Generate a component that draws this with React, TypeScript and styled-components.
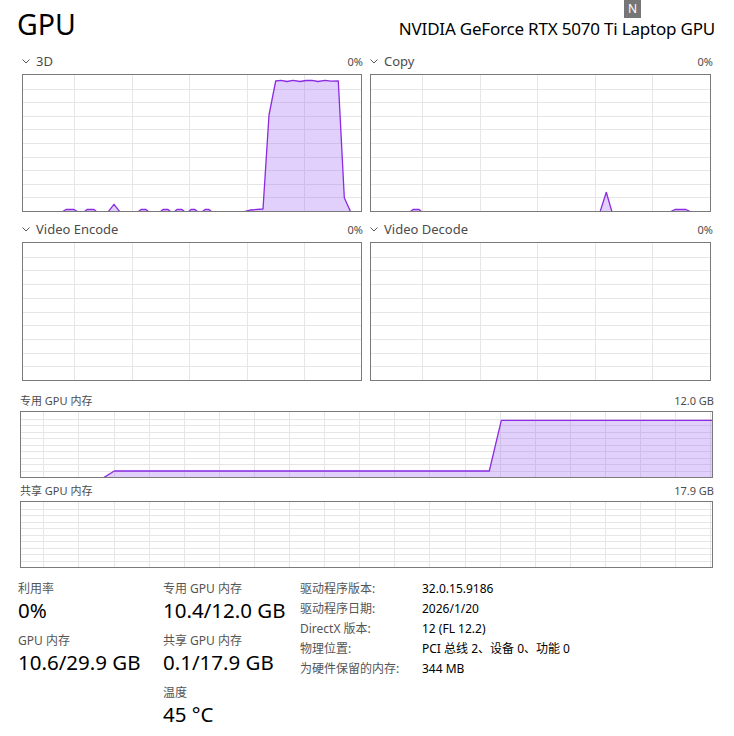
import React from "react";
import styled, { createGlobalStyle } from "styled-components";

type Pt = [number, number];

const LINE = "#8b2be2";
const FILL = "rgba(155, 95, 245, 0.3)";
const GRID = "#e6e6e6";

const GlobalStyle = createGlobalStyle`
  body {
    margin: 0;
    background: #fff;
    font-family: "Noto Sans", "Noto Sans CJK SC", sans-serif;
  }
`;

const Page = styled.div`
  position: relative;
  width: 734px;
  height: 736px;
  overflow: hidden;
  background: #fff;
  color: #000;
`;

const Badge = styled.div`
  position: absolute;
  left: 624px;
  top: 0;
  width: 17px;
  height: 18px;
  background: #767676;
  color: #fff;
  font-size: 12px;
  line-height: 18px;
  text-align: center;
`;

const Header = styled.div`
  display: flex;
  justify-content: space-between;
  align-items: baseline;
  height: 43px;
  padding: 0 19px 0 17px;
  box-sizing: border-box;
`;

const Title = styled.div`
  font-size: 28.5px;
  line-height: 48px;
`;

const Subtitle = styled.div`
  font-size: 17px;
  letter-spacing: -0.2px;
`;

const ChartGrid = styled.div`
  display: grid;
  grid-template-columns: 339px 341px;
  column-gap: 9px;
  padding: 0 23px 0 22px;
`;

const Head = styled.div<{ $h: number; $pad?: number }>`
  display: flex;
  justify-content: space-between;
  align-items: flex-end;
  height: ${(p) => p.$h}px;
  padding-bottom: ${(p) => p.$pad ?? 5}px;
  box-sizing: border-box;
  color: #4c4c4c;
`;

const HeadLabel = styled.div`
  display: flex;
  align-items: center;
  gap: 6px;
  font-size: 13px;
  line-height: 16px;
`;

const HeadValue = styled.div`
  font-size: 11px;
  line-height: 14px;
  margin-right: -2px;
`;

const SmallLabel = styled.div`
  font-size: 11px;
  line-height: 14px;
`;

const Box = styled.div<{ $w: number; $h: number }>`
  width: ${(p) => p.$w}px;
  height: ${(p) => p.$h}px;
  border: 1px solid #7a7a7a;
  box-sizing: border-box;
  overflow: hidden;

  svg {
    display: block;
  }
`;

const MemSection = styled.div`
  padding: 0 22px 0 20px;
`;

const Stats = styled.div`
  display: grid;
  grid-template-columns: 145px 137px 1fr;
  padding: 12px 0 0 18px;
`;

const StatColumn = styled.div`
  display: flex;
  flex-direction: column;
`;

const Stat = styled.div`
  height: 52px;
`;

const StatLabel = styled.div`
  font-size: 12px;
  line-height: 18px;
  color: #555;
`;

const StatValue = styled.div`
  font-size: 20.5px;
  line-height: 24px;
  color: #000;
`;

const InfoTable = styled.div`
  display: grid;
  grid-template-columns: 122px 1fr;
  grid-auto-rows: 20px;
  align-items: center;
  font-size: 12px;
  margin-top: -2px;
`;

const InfoKey = styled.div`
  color: #555;
`;

const InfoVal = styled.div`
  color: #000;
`;

const Chevron = () => (
  <svg width="8" height="5" viewBox="0 0 8 5">
    <path d="M0.5 0.5 L4 4 L7.5 0.5" fill="none" stroke="#555" strokeWidth="1" />
  </svg>
);

interface ChartProps {
  w: number;
  h: number;
  cell: number;
  offset: number;
  rows: number;
  origin?: Pt;
  data?: Pt[];
}

const Chart = ({ w, h, cell, offset, rows, origin = [0, 0], data }: ChartProps) => {
  const W = w - 2;
  const H = h - 2;
  const vLines: number[] = [];
  for (let x = offset; x < W; x += cell) vLines.push(Math.round(x) + 0.5);
  const hLines: number[] = [];
  for (let k = 1; k < rows; k++) hLines.push(Math.round((k * H) / rows) + 0.5);

  const pts = (data ?? []).map(([x, y]) => [x - origin[0], y - origin[1]] as Pt);
  const line = pts.map(([x, y]) => `${x},${y}`).join(" ");
  const area = pts.length
    ? `M${pts[0][0]},${H + 2} L${line.replace(/ /g, " L")} L${pts[pts.length - 1][0]},${H + 2} Z`
    : "";

  return (
    <Box $w={w} $h={h}>
      <svg width={W} height={H} viewBox={`0 0 ${W} ${H}`}>
        {vLines.map((x) => (
          <line key={`v${x}`} x1={x} x2={x} y1={0} y2={H} stroke={GRID} strokeWidth={1} />
        ))}
        {hLines.map((y) => (
          <line key={`h${y}`} x1={0} x2={W} y1={y} y2={y} stroke={GRID} strokeWidth={1} />
        ))}
        {pts.length > 0 && (
          <>
            <path d={area} fill={FILL} />
            <polyline points={line} fill="none" stroke={LINE} strokeWidth={1.3} strokeLinejoin="round" />
          </>
        )}
      </svg>
    </Box>
  );
};

const data3d: Pt[] = [
  [23, 212], [62, 212], [66, 209.5], [74, 209.5], [78, 212], [84, 212], [87, 209.5], [94, 209.5],
  [97, 212], [108, 212], [114, 204.3], [120, 212], [138, 212], [141, 209.5], [146, 209.5], [149, 212],
  [160, 212], [163, 209.5], [168, 209.5], [171, 212], [174, 212], [177, 209.5], [182, 209.5], [185, 212],
  [188, 212], [191, 209.5], [195, 209.5], [198, 212], [202, 212], [205, 209.5], [209, 209.5], [212, 212],
  [243, 212], [250, 210], [263, 209], [269, 115], [275.7, 81], [281, 80.3], [287, 81.5], [293, 80.3],
  [300, 81.5], [306, 80.5], [312, 80.3], [318, 81.5], [325, 80.3], [331, 81.2], [338.3, 81],
  [344.3, 197.7], [350.7, 212], [361, 212],
];

const dataCopy: Pt[] = [
  [371, 212], [410, 212], [413, 209.5], [419, 209.5], [422, 212], [600, 212], [606.3, 192.3],
  [612, 212], [670, 212], [675, 209.5], [686, 209.5], [691, 212], [711, 212],
];

const dataMem: Pt[] = [
  [21, 478], [103, 478], [114.3, 471], [489.3, 471], [501.3, 420.3], [713, 420.3],
];

const engines = [
  { name: "3D", data: data3d, origin: [23, 75] as Pt },
  { name: "Copy", data: dataCopy, origin: [371, 75] as Pt },
  { name: "Video Encode" },
  { name: "Video Decode" },
];

const stats = [
  [
    { label: "利用率", value: "0%" },
    { label: "GPU 内存", value: "10.6/29.9 GB" },
  ],
  [
    { label: "专用 GPU 内存", value: "10.4/12.0 GB" },
    { label: "共享 GPU 内存", value: "0.1/17.9 GB" },
    { label: "温度", value: "45 °C" },
  ],
];

const info = [
  ["驱动程序版本:", "32.0.15.9186"],
  ["驱动程序日期:", "2026/1/20"],
  ["DirectX 版本:", "12 (FL 12.2)"],
  ["物理位置:", "PCI 总线 2、设备 0、功能 0"],
  ["为硬件保留的内存:", "344 MB"],
];

const App = () => {
  return (
    <Page>
      <GlobalStyle />
      <Badge>N</Badge>
      <Header>
        <Title>GPU</Title>
        <Subtitle>NVIDIA GeForce RTX 5070 Ti Laptop GPU</Subtitle>
      </Header>

      <ChartGrid>
        {engines.map((e, i) => (
          <div key={e.name}>
            <Head $h={i < 2 ? 31 : 30}>
              <HeadLabel>
                <Chevron />
                {e.name}
              </HeadLabel>
              <HeadValue>0%</HeadValue>
            </Head>
            <Chart
              w={i % 2 === 0 ? 340 : 341}
              h={i < 2 ? 138 : 139}
              cell={57.5}
              offset={51}
              rows={10}
              origin={e.origin}
              data={e.data}
            />
          </div>
        ))}
      </ChartGrid>

      <MemSection>
        <Head $h={30} $pad={3}>
          <SmallLabel>专用 GPU 内存</SmallLabel>
          <HeadValue>12.0 GB</HeadValue>
        </Head>
        <Chart w={693} h={67} cell={35.1} offset={22.3} rows={10} origin={[21, 412]} data={dataMem} />
        <Head $h={23} $pad={3}>
          <SmallLabel>共享 GPU 内存</SmallLabel>
          <HeadValue>17.9 GB</HeadValue>
        </Head>
        <Chart w={693} h={67} cell={35.1} offset={22.3} rows={10} />
      </MemSection>

      <Stats>
        {stats.map((col, i) => (
          <StatColumn key={i}>
            {col.map((s) => (
              <Stat key={s.label}>
                <StatLabel>{s.label}</StatLabel>
                <StatValue>{s.value}</StatValue>
              </Stat>
            ))}
          </StatColumn>
        ))}
        <InfoTable>
          {info.map(([k, v]) => (
            <React.Fragment key={k}>
              <InfoKey>{k}</InfoKey>
              <InfoVal>{v}</InfoVal>
            </React.Fragment>
          ))}
        </InfoTable>
      </Stats>
    </Page>
  );
};

export default App;
